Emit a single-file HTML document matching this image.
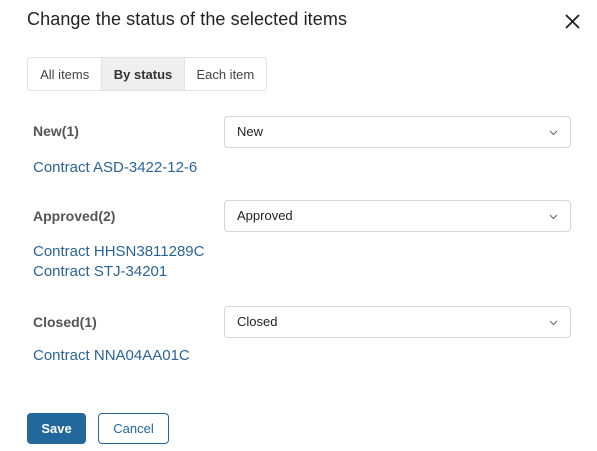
<!DOCTYPE html><html><head><style>
body{margin:0;width:597px;height:451px;background:#fff;font-family:"Liberation Sans",sans-serif;position:relative;overflow:hidden;color:#333}
.a{position:absolute}
.t{left:27px;top:9px;font-size:18px;color:#222;letter-spacing:0.1px}
.tabs{left:27px;top:57px;width:238px;height:32px;border:1px solid #e2e2e2;border-radius:4px;display:flex;font-size:13px;overflow:hidden}
.tabs div{display:flex;align-items:center;justify-content:center;color:#444}
.lbl{left:33px;font-size:14px;font-weight:bold;color:#555}
.lnk{left:33px;font-size:15px;color:#2a6496}
.sel{left:224px;width:347px;height:32px;border:1px solid #d6d6d6;border-radius:4px;font-size:13px;color:#222;box-sizing:border-box;padding-left:12px;line-height:30px}
.sel svg{position:absolute;right:12px;top:13px}
.btn{top:413px;height:31px;border-radius:4px;box-sizing:border-box;font-size:13px;display:flex;align-items:center;justify-content:center}
</style></head><body>
<div class="a t">Change the status of the selected items</div>
<svg class="a" style="left:564px;top:13px" width="17" height="17"><path d="M2 2L15 15M15 2L2 15" stroke="#222" stroke-width="1.9"/></svg>
<div class="a tabs"><div style="width:74px">All items</div><div style="width:82px;background:#efefef;border-left:1px solid #e2e2e2;border-right:1px solid #e2e2e2;font-weight:bold;color:#333">By status</div><div style="width:82px">Each item</div></div>
<div class="a lbl" style="top:123px">New(1)</div>
<div class="a sel" style="top:116px">New<svg width="9" height="6"><path d="M1 1L4.5 4.5L8 1" stroke="#666" fill="none"/></svg></div>
<div class="a lnk" style="top:159px">Contract ASD-3422-12-6</div>
<div class="a lbl" style="top:208px">Approved(2)</div>
<div class="a sel" style="top:200px">Approved<svg width="9" height="6"><path d="M1 1L4.5 4.5L8 1" stroke="#666" fill="none"/></svg></div>
<div class="a lnk" style="top:243px">Contract HHSN3811289C</div>
<div class="a lnk" style="top:263px">Contract STJ-34201</div>
<div class="a lbl" style="top:314px">Closed(1)</div>
<div class="a sel" style="top:306px">Closed<svg width="9" height="6"><path d="M1 1L4.5 4.5L8 1" stroke="#666" fill="none"/></svg></div>
<div class="a lnk" style="top:347px">Contract NNA04AA01C</div>
<div class="a btn" style="left:27px;width:59px;background:#22689c;color:#fff;font-weight:bold">Save</div>
<div class="a btn" style="left:98px;width:71px;border:1px solid #22689c;color:#22689c">Cancel</div>
</body></html>
